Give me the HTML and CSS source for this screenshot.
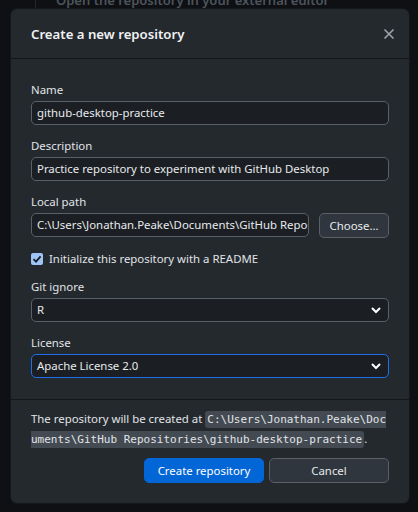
FILE: index.html
```html
<!DOCTYPE html>
<html>
<head>
<meta charset="utf-8">
<link rel="stylesheet" href="styles.css">
</head>
<body>
<div class="backdrop">
  <div class="backdrop-col"></div>
  <div class="backdrop-text">Open the repository in your external editor</div>
</div>
<div class="dialog">
  <header class="dialog-header">
    <h1 class="title">Create a new repository</h1>
    <svg class="close" width="12" height="12" viewBox="0 0 12 12"><path d="M1.5 1.5 L10.5 10.5 M10.5 1.5 L1.5 10.5" stroke="#9ea4aa" stroke-width="1.6" fill="none"/></svg>
  </header>
  <div class="dialog-body">
    <div class="field">
      <label class="label">Name</label>
      <div class="input">github-desktop-practice</div>
    </div>
    <div class="field">
      <label class="label">Description</label>
      <div class="input">Practice repository to experiment with GitHub Desktop</div>
    </div>
    <div class="field">
      <label class="label">Local path</label>
      <div class="row">
        <div class="input grow">C:\Users\Jonathan.Peake\Documents\GitHub Repositories</div>
        <div class="btn choose">Choose…</div>
      </div>
    </div>
    <div class="check-row">
      <span class="checkbox"><svg width="12" height="12" viewBox="0 0 12 12"><path d="M2.5 6.2 L5 8.7 L9.6 3.3" stroke="#1b1f23" stroke-width="1.8" fill="none"/></svg></span>
      <span class="check-label">Initialize this repository with a README</span>
    </div>
    <div class="field">
      <label class="label">Git ignore</label>
      <div class="input select"><span>R</span><svg class="chev" width="12" height="8" viewBox="0 0 12 8"><path d="M2 2 L6 6 L10 2" stroke="#ffffff" stroke-width="2" fill="none"/></svg></div>
    </div>
    <div class="field">
      <label class="label">License</label>
      <div class="input select focused"><span>Apache License 2.0</span><svg class="chev" width="12" height="8" viewBox="0 0 12 8"><path d="M2 2 L6 6 L10 2" stroke="#ffffff" stroke-width="2" fill="none"/></svg></div>
    </div>
  </div>
  <footer class="dialog-footer">
    <p class="note">The repository will be created at <code class="path">C:\Users\Jonathan.Peake\Documents\GitHub Repositories\github-desktop-practice</code>.</p>
    <div class="actions">
      <div class="btn primary">Create repository</div>
      <div class="btn">Cancel</div>
    </div>
  </footer>
</div>
</body>
</html>
```
FILE: styles.css
```css
html, body {
  margin: 0;
  padding: 0;
}
body {
  width: 418px;
  height: 512px;
  background: #0e1013;
  font-family: "Noto Sans", "Open Sans", sans-serif;
  color: #e1e4e8;
  position: relative;
  overflow: hidden;
}
.backdrop-col {
  position: absolute;
  left: 35px;
  top: 0;
  width: 1px;
  height: 12px;
  background: #22262b;
}
.backdrop-text {
  position: absolute;
  left: 56px;
  top: -9px;
  font-size: 13px;
  font-weight: 600;
  color: #4d545c;
}
.dialog {
  position: absolute;
  left: 11px;
  top: 9px;
  width: 398px;
  height: 494px;
  background: #24292e;
  border-radius: 6px;
  box-shadow: 0 0 0 1px #15181b;
  display: flex;
  flex-direction: column;
}
.dialog-header {
  height: 49px;
  flex: none;
  border-bottom: 1px solid #141619;
  display: flex;
  align-items: center;
  justify-content: space-between;
  padding: 0 14px 0 20px;
}
.title {
  margin: 0;
  font-size: 13.2px;
  font-weight: 600;
  color: #f0f2f4;
}
.close {
  display: block;
}
.dialog-body {
  padding: 23px 20px 0 20px;
  display: flex;
  flex-direction: column;
  flex: 1;
}
.field {
  display: flex;
  flex-direction: column;
  margin-bottom: 13px;
}
.label {
  font-size: 11.4px;
  line-height: 16px;
  margin-bottom: 3px;
  color: #e1e4e8;
}
.input {
  height: 24px;
  box-sizing: border-box;
  border: 1px solid #5a6068;
  border-radius: 5px;
  background: #1b1f23;
  font-size: 11.4px;
  line-height: 22px;
  padding: 0 5px;
  white-space: nowrap;
  overflow: hidden;
  color: #e8eaed;
}
.row {
  display: flex;
  gap: 10px;
}
.grow {
  flex: 1;
}
.btn {
  height: 25px;
  box-sizing: border-box;
  border: 1px solid #5a6068;
  border-radius: 5px;
  background: #2f363d;
  font-size: 11.4px;
  line-height: 23px;
  text-align: center;
  color: #e8eaed;
  width: 120px;
}
.choose {
  width: 70px;
}
.check-row {
  display: flex;
  align-items: center;
  gap: 6px;
  margin: 0 0 12px 0;
}
.checkbox {
  width: 12px;
  height: 12px;
  border-radius: 2px;
  background: #9fc5f8;
  display: flex;
}
.check-label {
  font-size: 11.4px;
  line-height: 16px;
}
.select {
  display: flex;
  align-items: center;
  justify-content: space-between;
  padding-right: 6px;
}
.chev {
  display: block;
}
.focused {
  border-color: #1f6feb;
}
.dialog-footer {
  flex: none;
  border-top: 1px solid #141619;
  padding: 9px 20px 20px 20px;
}
.note {
  margin: 0 0 9px 0;
  font-size: 11.4px;
  line-height: 19px;
  word-break: break-all;
}
.path {
  font-family: "DejaVu Sans Mono", "Liberation Mono", monospace;
  font-size: 11px;
  background: #434a52;
  border-radius: 3px;
  padding: 2px 2px;
}
.actions {
  display: flex;
  justify-content: flex-end;
  gap: 5px;
}
.primary {
  background: #0366d6;
  border-color: #0366d6;
  color: #ffffff;
}
```
